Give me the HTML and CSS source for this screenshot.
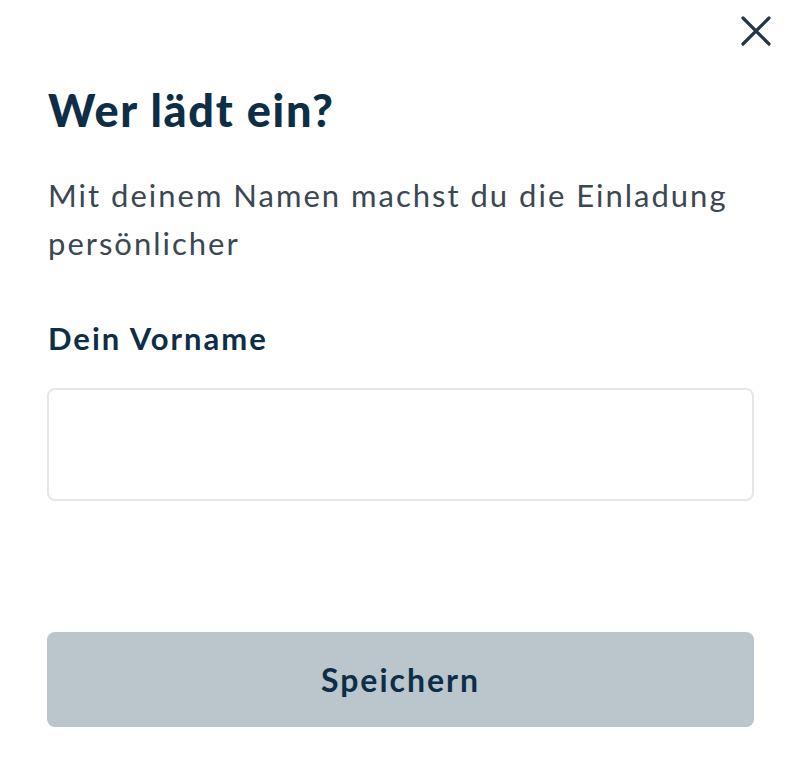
FILE: index.html
```html
<!DOCTYPE html>
<html lang="de">
<head>
    <meta charset="UTF-8">
    <meta name="viewport" content="width=device-width, initial-scale=1.0">
    <title>Wer lädt ein?</title>
    <link rel="stylesheet" href="styles.css">
</head>
<body>
<div class="sheet">
    <div class="top">
        <button class="close" aria-label="Schließen">
            <svg width="30" height="30" viewBox="0 0 30 30">
                <path d="M2 2 L28 28 M28 2 L2 28" stroke="#233747" stroke-width="3.2" stroke-linecap="round" fill="none"/>
            </svg>
        </button>
    </div>
    <h2 class="title">Wer lädt ein?</h2>
    <p class="intro">Mit deinem Namen machst du die Einladung persönlicher</p>
    <label class="label" for="vorname">Dein Vorname</label>
    <input class="field" type="text" id="vorname">
    <button class="save">Speichern</button>
</div>
</body>
</html>
```

FILE: styles.css
```css
body {
    margin: 0;
    padding: 0;
    background-color: #fff;
    font-family: Lato, "Open Sans", sans-serif;
    color: #0f2d44;
}
.sheet {
    display: flex;
    flex-direction: column;
    padding: 16px 51px 0 47px;
}
.top {
    display: flex;
    justify-content: flex-end;
    margin-right: -17px;
}
.close {
    background: transparent;
    border: none;
    padding: 0;
    width: 30px;
    height: 30px;
    cursor: pointer;
}
.title {
    margin: 38px 0 0 1px;
    font-size: 45px;
    font-weight: 900;
    line-height: 52px;
    letter-spacing: 1.7px;
    color: #0d2e46;
}
.intro {
    margin: 35px 0 0 1px;
    font-size: 31px;
    line-height: 48px;
    letter-spacing: 2px;
    color: #3b4752;
    max-width: 700px;
}
.label {
    margin: 51px 0 0 1px;
    font-size: 31px;
    font-weight: 700;
    line-height: 40px;
    letter-spacing: 2px;
    color: #0d2e46;
}
.field {
    margin-top: 30px;
    height: 113px;
    border: 2px solid #e6e6e6;
    border-radius: 8px;
    box-sizing: border-box;
    font-size: 28px;
    padding: 0 20px;
}
.save {
    margin-top: 131px;
    height: 95px;
    border: none;
    border-radius: 8px;
    background-color: #bac6cc;
    color: #0d2e46;
    font-family: inherit;
    font-size: 32px;
    font-weight: 700;
    letter-spacing: 2px;
    cursor: pointer;
}
```
